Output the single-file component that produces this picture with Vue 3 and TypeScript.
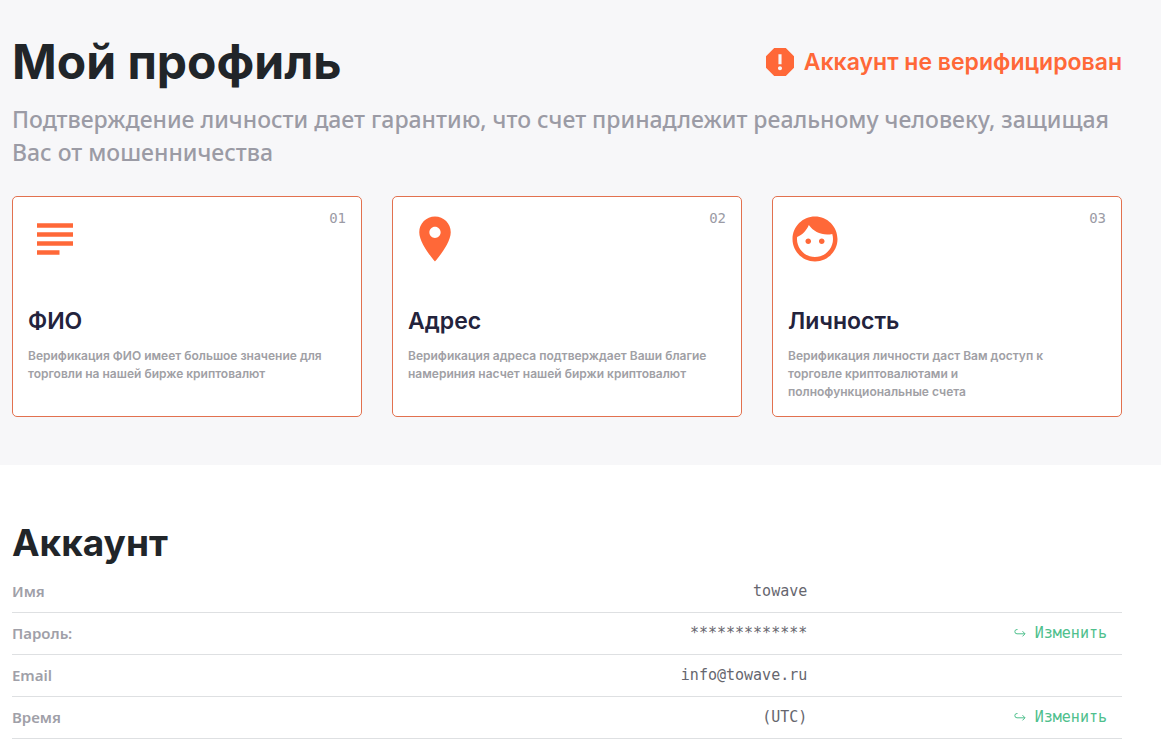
<script setup lang="ts">
interface Step {
  number: string
  icon: 'text' | 'place' | 'face'
  title: string
  lines: string[]
}

interface Row {
  id: string
  label: string
  value: string
  editable: boolean
}

const steps: Step[] = [
  {
    number: '01',
    icon: 'text',
    title: 'ФИО',
    lines: ['Верификация ФИО имеет большое значение для', 'торговли на нашей бирже криптовалют'],
  },
  {
    number: '02',
    icon: 'place',
    title: 'Адрес',
    lines: ['Верификация адреса подтверждает Ваши благие', 'намериния насчет нашей биржи криптовалют'],
  },
  {
    number: '03',
    icon: 'face',
    title: 'Личность',
    lines: [
      'Верификация личности даст Вам доступ к',
      'торговле криптовалютами и',
      'полнофункциональные счета',
    ],
  },
]

const rows: Row[] = [
  { id: 'name', label: 'Имя', value: 'towave', editable: false },
  { id: 'password', label: 'Пароль:', value: '*************', editable: true },
  { id: 'email', label: 'Email', value: 'info@towave.ru', editable: false },
  { id: 'time', label: 'Время', value: '(UTC)', editable: true },
]
</script>

<template>
  <main class="page">
    <section class="profile">
      <header class="head">
        <h1 class="title">Мой профиль</h1>
        <p class="status">
          <svg class="status-icon" viewBox="3 3 18 18" aria-hidden="true">
            <path
              fill-rule="evenodd"
              d="M15.73 3H8.27L3 8.27v7.46L8.27 21h7.46L21 15.73V8.27L15.73 3zM12 17.3c-.72 0-1.3-.58-1.3-1.3s.58-1.3 1.3-1.3 1.3.58 1.3 1.3-.58 1.3-1.3 1.3zM13 13.4h-2V7h2v6.4z"
            />
          </svg>
          <span>Аккаунт не верифицирован</span>
        </p>
      </header>
      <p class="lead">
        Подтверждение личности дает гарантию, что счет принадлежит реальному человеку, защищая Вас от мошенничества
      </p>
      <div class="cards">
        <article v-for="step in steps" :key="step.number" class="card">
          <div class="card-top">
            <svg class="card-icon" viewBox="0 0 24 24" aria-hidden="true">
              <path
                v-if="step.icon === 'text'"
                d="M14 17H4v2h10v-2zm6-8H4v2h16V9zM4 15h16v-2H4v2zM4 5v2h16V5H4z"
              />
              <path
                v-else-if="step.icon === 'place'"
                d="M12 2C8.13 2 5 5.13 5 9c0 5.25 7 13 7 13s7-7.75 7-13c0-3.87-3.13-7-7-7zm0 9.5c-1.38 0-2.5-1.12-2.5-2.5s1.12-2.5 2.5-2.5 2.5 1.12 2.5 2.5-1.12 2.5-2.5 2.5z"
              />
              <path
                v-else
                d="M9 11.75c-.69 0-1.25.56-1.25 1.25s.56 1.25 1.25 1.25 1.25-.56 1.25-1.25-.56-1.25-1.25-1.25zm6 0c-.69 0-1.25.56-1.25 1.25s.56 1.25 1.25 1.25 1.25-.56 1.25-1.25-.56-1.25-1.25-1.25zM12 2C6.48 2 2 6.48 2 12s4.48 10 10 10 10-4.48 10-10S17.52 2 12 2zm0 18c-4.41 0-8-3.59-8-8 0-.29.02-.58.05-.86 2.36-1.05 4.23-2.98 5.21-5.37C11.07 8.33 14.05 10 17.42 10c.78 0 1.53-.09 2.25-.26.21.71.33 1.47.33 2.26 0 4.41-3.59 8-8 8z"
              />
            </svg>
            <span class="number">{{ step.number }}</span>
          </div>
          <h2 class="card-title">{{ step.title }}</h2>
          <p class="card-text">{{ step.lines.join('\n') }}</p>
        </article>
      </div>
    </section>

    <section class="account">
      <h2 class="account-title">Аккаунт</h2>
      <table class="details">
        <tbody>
          <tr v-for="row in rows" :key="row.id">
            <th scope="row">{{ row.label }}</th>
            <td class="value">{{ row.value }}</td>
            <td class="action">
              <a v-if="row.editable" :href="'#' + row.id" class="edit">
                <svg class="arrow" viewBox="0 0 12 10" aria-hidden="true">
                  <path d="M3.5 1.5H3A2 2 0 0 0 3 5.8H11M8.5 3.2L11 5.8L8.5 8.4" />
                </svg>
                <span>Изменить</span>
              </a>
            </td>
          </tr>
        </tbody>
      </table>
    </section>
  </main>
</template>

<style>
body {
  margin: 0;
  background: #ffffff;
}
</style>

<style scoped>
.page {
  font-family: Inter, 'Open Sans', sans-serif;
  color: #212529;
}

h1,
h2,
p {
  margin: 0;
}

.profile {
  padding: 32px 39px 48px 12px;
  background: #f7f7f9;
}

.head {
  display: flex;
  align-items: center;
  justify-content: space-between;
  gap: 24px;
}

.title {
  font-size: 48px;
  line-height: 60px;
  font-weight: 700;
}

.status {
  display: flex;
  align-items: center;
  gap: 10px;
  font-size: 23px;
  line-height: 30px;
  font-weight: 600;
  color: #ff6838;
}

.status-icon {
  flex: none;
  width: 28px;
  height: 28px;
  fill: #ff6838;
}

.lead {
  margin-top: 11px;
  font-family: 'Noto Sans', 'Open Sans', sans-serif;
  font-size: 23px;
  line-height: 33px;
  font-weight: 500;
  color: #9b9ba5;
}

.cards {
  display: grid;
  grid-template-columns: repeat(3, 1fr);
  gap: 30px;
  margin-top: 27px;
}

.card {
  padding: 12px 15px 15px;
  border: 1px solid #e2714f;
  border-radius: 5px;
  background: #ffffff;
}

.card-top {
  display: flex;
  align-items: flex-start;
  justify-content: space-between;
  height: 92px;
}

.card-icon {
  width: 54px;
  height: 54px;
  margin-top: 3px;
  fill: #ff6838;
}

.number {
  font-family: 'DejaVu Sans Mono', monospace;
  font-size: 14px;
  line-height: 18px;
  color: #9b9ba5;
}

.card-title {
  font-size: 23px;
  line-height: 40px;
  font-weight: 600;
  color: #23233c;
}

.card-text {
  margin-top: 6px;
  font-size: 12px;
  line-height: 18px;
  font-weight: 600;
  white-space: pre-line;
  color: #a0a0a5;
}

.account {
  padding: 54px 39px 14px 12px;
}

.account-title {
  font-size: 37px;
  line-height: 48px;
  font-weight: 700;
}

.details {
  width: 100%;
  margin-top: 3px;
  border-collapse: collapse;
  table-layout: fixed;
}

.details th,
.details td {
  box-sizing: border-box;
  height: 42px;
  padding: 0;
  border-bottom: 1px solid #dee0e2;
  font-size: 15px;
  line-height: 20px;
}

.details th {
  width: 32%;
  font-family: 'Noto Sans', sans-serif;
  font-weight: 600;
  text-align: left;
  color: #a0a0a8;
}

.details .value {
  width: 41%;
  padding-right: 15px;
  font-family: 'DejaVu Sans Mono', monospace;
  text-align: right;
  color: #66666e;
}

.details .action {
  padding-right: 15px;
  font-family: 'DejaVu Sans Mono', monospace;
  text-align: right;
}

.edit {
  display: inline-flex;
  align-items: center;
  gap: 9px;
  color: #4fc08d;
  text-decoration: none;
}

.arrow {
  width: 12px;
  height: 10px;
  fill: none;
  stroke: #4fc08d;
  stroke-width: 1;
}
</style>
